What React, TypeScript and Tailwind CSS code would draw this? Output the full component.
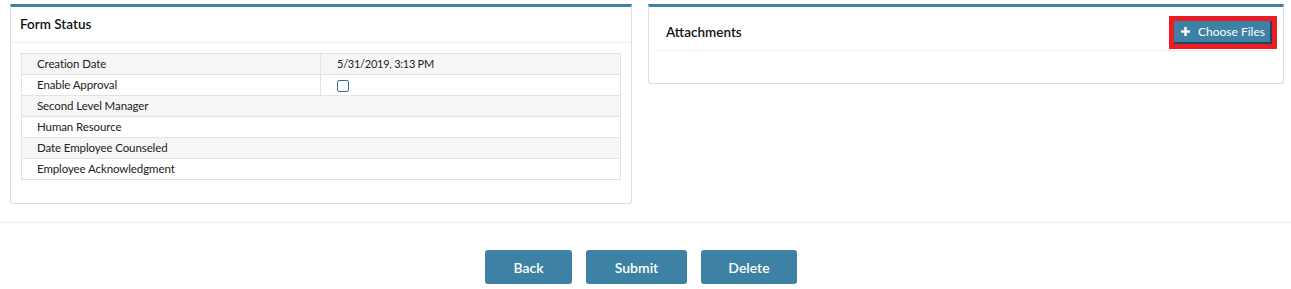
import React from "react";

const rows: { label: string; value?: React.ReactNode; split?: boolean }[] = [
  {
    label: "Creation Date",
    value: <span className="text-[11px] tracking-[-0.25px]">5/31/2019, 3:13 PM</span>,
    split: true,
  },
  {
    label: "Enable Approval",
    value: <span className="mt-[1px] block h-[12px] w-[12px] rounded-[2px] border border-[#3a6f8f] bg-white" />,
    split: true,
  },
  { label: "Second Level Manager" },
  { label: "Human Resource" },
  { label: "Date Employee Counseled" },
  { label: "Employee Acknowledgment" },
];

export default function App() {
  return (
    <div
      className="h-[289px] w-[1291px] overflow-hidden bg-white text-[#222]"
      style={{ fontFamily: "Lato, 'Noto Sans', sans-serif" }}
    >
      <div className="flex items-start pl-[10px] pt-[4px]">
        {/* Form Status */}
        <div className="w-[622px] rounded-b-[3px] border-x border-b border-t-[3px] border-x-[#dcdcdc] border-b-[#dcdcdc] border-t-[#3d81a3]">
          <div className="flex h-[36px] items-center border-b border-[#ededed] pl-[9px] text-[13.5px] font-semibold text-[#111]">
            Form Status
          </div>
          <div className="px-[10px] pb-[23px] pt-[10px]">
            <div className="border-x border-t border-[#e2e2e2]">
              {rows.map((r, i) => (
                <div
                  key={r.label}
                  className={`flex h-[21px] border-b border-[#e2e2e2] text-[11.5px] tracking-[-0.1px] text-[#222] ${
                    i % 2 === 0 ? "bg-[#f6f6f6]" : "bg-white"
                  }`}
                >
                  <div
                    className={`flex w-[299px] items-center pl-[15px] ${
                      r.split ? "border-r border-[#e2e2e2]" : ""
                    }`}
                  >
                    {r.label}
                  </div>
                  <div className="flex flex-1 items-center pl-[16px]">{r.value}</div>
                </div>
              ))}
            </div>
          </div>
        </div>

        {/* Attachments */}
        <div className="ml-[16px] w-[636px] rounded-b-[3px] border-x border-b border-t-[3px] border-x-[#dcdcdc] border-b-[#dcdcdc] border-t-[#3d81a3]">
          <div className="mx-[7px] flex h-[44px] items-center justify-between border-b border-[#efefef] pl-[10px] pt-[8px]">
            <span className="text-[13.5px] font-semibold text-[#111]">Attachments</span>
            <div className="mr-[-1px] border-[5px] border-[#ec1c24]">
              <button className="flex h-[23px] w-[98px] items-center justify-center gap-[8px] border-b-2 border-r-2 border-b-[#23465a] border-r-[#23465a] bg-[#3d82a4] pl-[2px] text-[12px] text-white">
                <svg width="9" height="9" viewBox="0 0 9 9" fill="white">
                  <rect x="3.3" y="0" width="2.4" height="9" />
                  <rect x="0" y="3.3" width="9" height="2.4" />
                </svg>
                Choose Files
              </button>
            </div>
          </div>
          <div className="h-[32px]" />
        </div>
      </div>

      <div className="mt-[18px] border-t border-[#ececec]" />

      <div className="flex justify-center gap-[14px] pr-[9px] pt-[27px]">
        <button className="h-[34px] w-[87px] rounded-[3px] bg-[#3d82a4] text-[14px] font-semibold text-white">
          Back
        </button>
        <button className="h-[34px] w-[101px] rounded-[3px] bg-[#3d82a4] text-[14px] font-semibold text-white">
          Submit
        </button>
        <button className="h-[34px] w-[96px] rounded-[3px] bg-[#3d82a4] text-[14px] font-semibold text-white">
          Delete
        </button>
      </div>
    </div>
  );
}
